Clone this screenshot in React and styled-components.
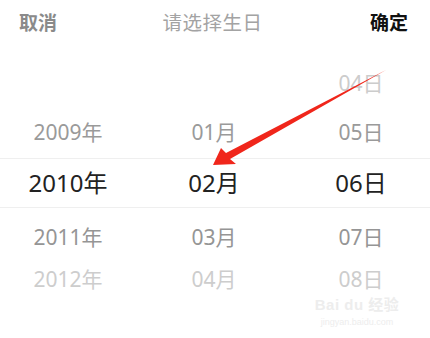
import React from "react";
import styled, { createGlobalStyle } from "styled-components";

const GlobalStyle = createGlobalStyle`
  html, body {
    margin: 0;
    padding: 0;
    background: #fff;
  }
  body {
    font-family: "Noto Sans", "Noto Sans CJK SC", sans-serif;
  }
`;

const Page = styled.div`
  position: relative;
  width: 430px;
  height: 338px;
  overflow: hidden;
  background: #fff;
`;

const Header = styled.div`
  display: flex;
  align-items: center;
  justify-content: space-between;
  height: 43px;
  padding: 0 22px 0 19px;
  font-family: "Noto Sans CJK SC", sans-serif;
`;

const HeadButton = styled.span`
  font-size: 19px;
  font-weight: bold;
  color: ${(props) => (props.primary ? "#111" : "#8a8a8a")};
`;

const Title = styled.span`
  font-size: 19.5px;
  color: #a3a3a3;
  letter-spacing: 0.5px;
  margin-right: 2px;
`;

const Wheel = styled.div`
  padding-top: 16px;
`;

const Row = styled.div`
  display: grid;
  grid-template-columns: 136px 156px 138px;
  align-items: center;
  height: ${(props) => props.h}px;
  box-sizing: border-box;
  border-top: ${(props) => (props.selected ? "1px solid #efefef" : "none")};
  border-bottom: ${(props) => (props.selected ? "1px solid #efefef" : "none")};
`;

const Cell = styled.span`
  text-align: center;
  font-size: ${(props) => (props.selected ? 24 : 21)}px;
  color: ${(props) => props.tone};
  line-height: 1;
`;

const Arrow = styled.svg`
  position: absolute;
  left: 0;
  top: 0;
  pointer-events: none;
`;

const Watermark = styled.div`
  position: absolute;
  left: 312px;
  top: 297px;
  width: 90px;
  display: flex;
  flex-direction: column;
  align-items: center;
  color: #ededed;
  font-family: "Liberation Sans", "Noto Sans CJK SC", sans-serif;
  line-height: 1;
`;

const MarkLogo = styled.span`
  font-size: 15px;
  font-weight: bold;
  letter-spacing: 0.5px;
`;

const MarkUrl = styled.span`
  font-size: 9px;
  margin-top: 6px;
`;

const rows = [
  { h: 48, tone: "#cccccc", cells: ["", "", "04日"] },
  { h: 51, tone: "#9a9a9a", cells: ["2009年", "01月", "05日"] },
  { h: 50, tone: "#222222", selected: true, cells: ["2010年", "02月", "06日"] },
  { h: 58, tone: "#959595", cells: ["2011年", "03月", "07日"] },
  { h: 26, tone: "#cdcdcd", cells: ["2012年", "04月", "08日"] },
];

export default function App() {
  return (
    <Page>
      <GlobalStyle />
      <Header>
        <HeadButton>取消</HeadButton>
        <Title>请选择生日</Title>
        <HeadButton primary>确定</HeadButton>
      </Header>
      <Wheel>
        {rows.map((row, i) => (
          <Row key={i} h={row.h} selected={row.selected}>
            {row.cells.map((c, j) => (
              <Cell key={j} tone={row.tone} selected={row.selected}>
                {c}
              </Cell>
            ))}
          </Row>
        ))}
      </Wheel>
      <Watermark>
        <MarkLogo>Bai du 经验</MarkLogo>
        <MarkUrl>jingyan.baidu.com</MarkUrl>
      </Watermark>
      <Arrow width="430" height="338" viewBox="0 0 430 338">
        <polygon
          points="213,165 221,148 226,153 386,70 230,159 236,164"
          fill="#f0261b"
        />
      </Arrow>
    </Page>
  );
}
